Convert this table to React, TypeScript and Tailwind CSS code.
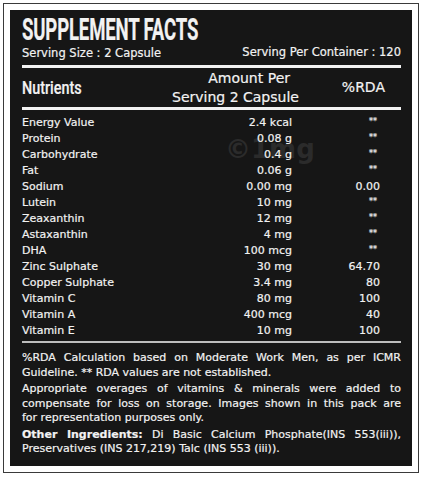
import React from 'react';

const rows: [string, string, string][] = [
  ['Energy Value', '2.4 kcal', '**'],
  ['Protein', '0.08 g', '**'],
  ['Carbohydrate', '0.4 g', '**'],
  ['Fat', '0.06 g', '**'],
  ['Sodium', '0.00 mg', '0.00'],
  ['Lutein', '10 mg', '**'],
  ['Zeaxanthin', '12 mg', '**'],
  ['Astaxanthin', '4 mg', '**'],
  ['DHA', '100 mcg', '**'],
  ['Zinc Sulphate', '30 mg', '64.70'],
  ['Copper Sulphate', '3.4 mg', '80'],
  ['Vitamin C', '80 mg', '100'],
  ['Vitamin A', '400 mcg', '40'],
  ['Vitamin E', '10 mg', '100'],
];

// every line except the last in a paragraph is stretched to full width
const Line = ({ children, full }: { children: React.ReactNode; full?: boolean }) => (
  <div className={full ? 'text-justify [text-align-last:justify]' : 'text-left'}>{children}</div>
);

export default function App() {
  return (
    <div className="w-[425px] h-[480px] bg-white p-[3px] font-['DejaVu_Sans',sans-serif]">
      <div className="h-[470px] w-[416px] border border-[#3a3a3a] p-[6px]">
        <div className="relative h-full bg-[#161616] text-[#f2f2f2] pl-[12px] pr-[11px] pt-[5px] [-webkit-text-stroke:0.2px_#f2f2f2]">
          {/* watermark */}
          <div className="absolute left-[215px] top-[126px] text-[26px] font-bold text-[#2b2b2b] leading-none select-none [-webkit-text-stroke:0]">
            ©1mg
          </div>

          <div className="relative">
            {/* Title */}
            <div className="h-[30px] whitespace-nowrap">
              <span className="inline-block origin-left scale-x-[0.6] font-['Roboto',sans-serif] font-bold text-[31px] leading-[30px] tracking-[-0.3px]">
                SUPPLEMENT FACTS
              </span>
            </div>
            <div className="flex justify-between items-center h-[14px] text-[11.5px] leading-[14px]">
              <span className="mt-[2px]">Serving Size : 2 Capsule</span>
              <span>Serving Per Container : 120</span>
            </div>
            <div className="h-[3px] bg-[#f2f2f2] mt-[6px]" />

            {/* column header */}
            <div className="grid grid-cols-[150px_118px_97px] items-center h-[39px]">
              <span className="inline-block origin-left scale-x-[0.8] font-['Roboto',sans-serif] font-medium text-[18px] whitespace-nowrap">
                Nutrients
              </span>
              <div className="text-right text-[14px] leading-[19px]">
                <div>Amount Per</div>
                <div className="whitespace-nowrap">Serving 2 Capsule</div>
              </div>
              <div className="text-right text-[14px] pr-[2px]">%RDA</div>
            </div>
            <div className="h-[3px] bg-[#f2f2f2]" />

            {/* rows */}
            <div className="pt-[5px] pb-[2px]">
              {rows.map(([name, amt, rda]) => (
                <div key={name} className="grid grid-cols-[150px_120px_88px] h-[16px] items-center text-[11px] leading-[16px]">
                  <span className="whitespace-nowrap">{name}</span>
                  <span className="text-right whitespace-nowrap">{amt}</span>
                  <span className={rda === '**' ? 'text-right pr-[3px] text-[8px] self-start leading-[13px]' : 'text-right'}>{rda}</span>
                </div>
              ))}
            </div>
            <div className="h-[2px] bg-[#bdbdbd]" />

            {/* notes */}
            <div className="pt-[8px] text-[11px] leading-[14.5px] space-y-[2px]">
              <div>
                <Line full>%RDA Calculation based on Moderate Work Men, as per ICMR</Line>
                <Line>Guideline. ** RDA values are not established.</Line>
              </div>
              <div>
                <Line full>Appropriate overages of vitamins &amp; minerals were added to</Line>
                <Line full>compensate for loss on storage. Images shown in this pack are</Line>
                <Line>for representation purposes only.</Line>
              </div>
              <div>
                <Line full>
                  <span className="font-bold">Other Ingredients:</span> Di Basic Calcium Phosphate(INS 553(iii)),
                </Line>
                <Line>Preservatives (INS 217,219) Talc (INS 553 (iii)).</Line>
              </div>
            </div>
          </div>
        </div>
      </div>
    </div>
  );
}
